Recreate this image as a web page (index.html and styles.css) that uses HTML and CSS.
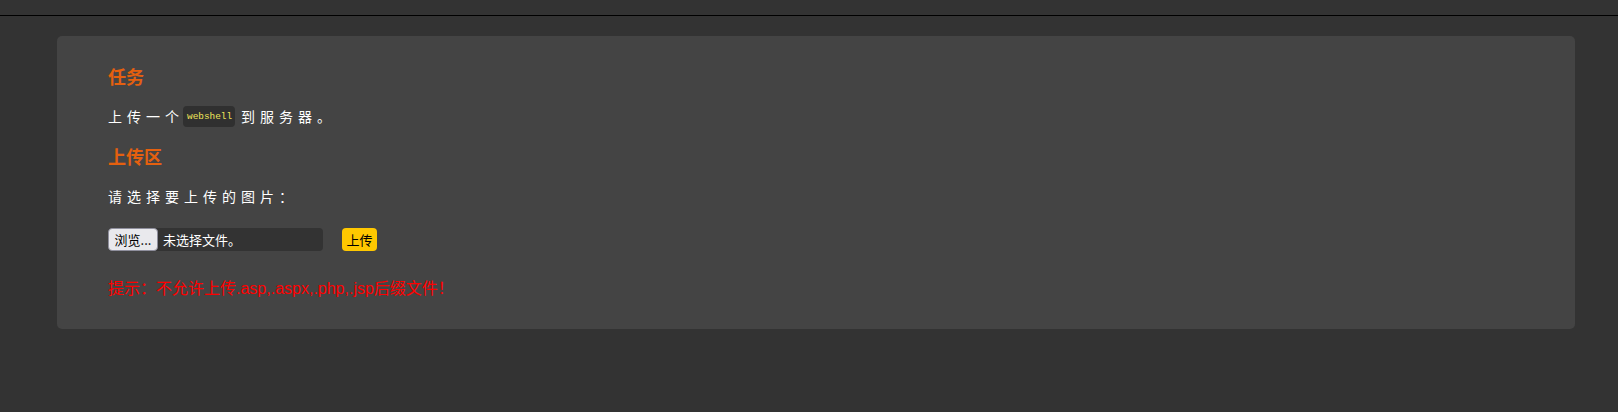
FILE: index.html
```html
<!DOCTYPE html>
<html lang="zh-CN">
<head>
<meta charset="utf-8">
<title>upload</title>
<link rel="stylesheet" href="styles.css">
</head>
<body>
<div class="topbar"></div>
<div class="card">
  <h2 class="title">任务</h2>
  <p class="desc">上传一个<code class="code">webshell</code>到服务器。</p>
  <h2 class="title title-upload">上传区</h2>
  <p class="desc desc-pick">请选择要上传的图片：</p>
  <form class="upload-row">
    <div class="file-input">
      <span class="browse">浏览...</span>
      <span class="file-name">未选择文件。</span>
    </div>
    <button type="button" class="submit">上传</button>
  </form>
  <p class="hint">提示：不允许上传.asp,.aspx,.php,.jsp后缀文件！</p>
</div>
</body>
</html>
```
FILE: styles.css
```css
html, body {
  margin: 0;
  padding: 0;
  background: #333333;
}
body {
  font-family: "Noto Sans CJK SC", "Liberation Sans", sans-serif;
  color: #ffffff;
  height: 412px;
  overflow: hidden;
}
.topbar {
  height: 15px;
  border-bottom: 1px solid #000000;
  background: #333333;
}
.card {
  margin: 20px 43px 0 57px;
  background: #444444;
  border-radius: 5px;
  padding: 28px 51px 28px;
}
.title {
  margin: 0;
  font-size: 18px;
  line-height: 24px;
  font-weight: bold;
  color: #e5600f;
}
.title-upload {
  margin-top: 16px;
}
.desc {
  margin: 16px 0 0;
  font-size: 14px;
  line-height: 24px;
  letter-spacing: 5px;
  color: #ffffff;
  display: flex;
  align-items: center;
}
.code {
  font-family: "Liberation Mono", "DejaVu Sans Mono", monospace;
  font-size: 9.4px;
  font-weight: normal;
  letter-spacing: 0;
  line-height: 21px;
  height: 21px;
  padding: 0 3px 0 4px;
  background: #303030;
  color: #f0e65a;
  border-radius: 4px;
  margin-right: 6px;
  margin-left: -1px;
}
.upload-row {
  margin: 20px 0 0;
  display: flex;
  align-items: center;
  gap: 19px;
}
.file-input {
  width: 215px;
  height: 23px;
  background: #333333;
  border-radius: 4px;
  display: flex;
  align-items: stretch;
  font-size: 13px;
}
.browse {
  box-sizing: border-box;
  width: 50px;
  background: #e9e9ed;
  color: #000000;
  border: 1px solid #8f8f9d;
  border-radius: 4px;
  display: flex;
  align-items: center;
  justify-content: center;
  font-size: 13px;
}
.file-name {
  display: flex;
  align-items: center;
  padding-left: 5px;
  color: #ffffff;
}
.submit {
  font-family: "Noto Sans CJK SC", sans-serif;
  height: 23px;
  width: 35px;
  padding: 0;
  border: none;
  border-radius: 4px;
  background: #ffc800;
  color: #000000;
  font-size: 13px;
  line-height: 23px;
}
.hint {
  margin: 26px 0 0;
  font-family: "Liberation Sans", "Noto Sans CJK SC", sans-serif;
  font-size: 16px;
  line-height: 24px;
  color: #ff0000;
}
```
